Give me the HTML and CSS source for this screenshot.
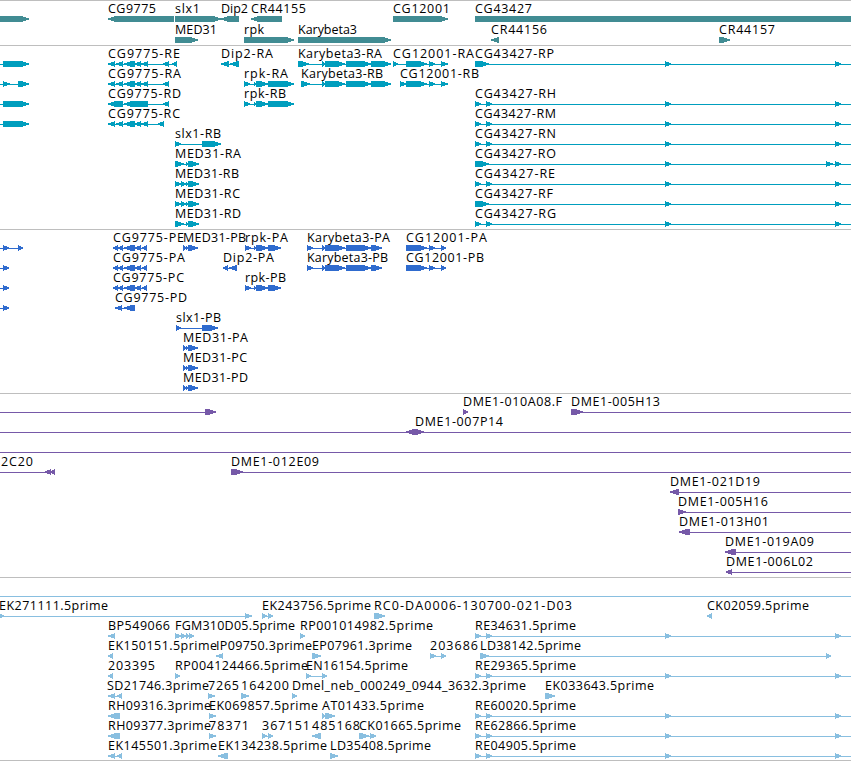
FILE: index.html
```
<!DOCTYPE html>
<html lang="en">
<head>
    <meta charset="UTF-8">
    <meta name="viewport" content="width=device-width, initial-scale=1.0">
    <title>Genome Browser</title>
    <link rel="stylesheet" href="styles.css">
</head>
<body>
    <main class="browser">
        <section class="track genes" id="genes"></section>
        <section class="track transcripts" id="transcripts"></section>
        <section class="track proteins" id="proteins"></section>
        <section class="track clones" id="clones"></section>
        <section class="track ests" id="ests"></section>
    </main>
    <script src="tracks.js"></script>
</body>
</html>
```
FILE: styles.css
```
body {
    background-color: white;
    margin: 0;
    padding: 0;
    overflow: hidden;
}

.browser {
    display: flex;
    flex-direction: column;
    width: 851px;
    overflow: hidden;
    border-bottom: 1px solid #bebebe;
}

.track {
    display: flex;
    flex-direction: column;
    border-top: 1px solid #bebebe;
    padding-bottom: 3px;
}

.row {
    display: block;
    width: 851px;
    height: 20px;
    overflow: visible;
}

.row text {
    font-family: "Open Sans", "Noto Sans", sans-serif;
    font-size: 12.5px;
    fill: black;
}

.row rect, .row polygon {
    shape-rendering: crispEdges;
}

.genes {
    fill: #418c93;
    padding-bottom: 2px;
}

.genes .row {
    height: 21px;
}

.transcripts {
    fill: #009ebe;
}

.proteins {
    fill: #2f6bce;
}

.clones {
    fill: #7659a8;
}

.ests {
    fill: #89bfe0;
    padding-bottom: 2px;
}
```
FILE: tracks.js
```
// feature: [label, label start, label end, direction, block start, block end, ...]
// blocks beyond the window edges only pull the connecting line along
const OUT = [900, 910];
const IN = [-20, -10];
const FULL = ['', 0, 0, 1, ...IN, ...OUT];

const rna = [475, 481, 486, 492, 665, 671, 835, 841, ...OUT];
const rnaLong = [475, 489, 665, 671, 835, 841, ...OUT];
const cg9775 = [108, 115, 116, 123, 124, 135, 135, 141, 141, 148];
const cg9775p = [113, 118, 118, 123, 124, 135, 135, 141, 142, 147];
const kary = [322, 325, 325, 345, 346, 371];
const rpk = [254, 256, 256, 268];
const med = [175, 184, 186, 188, 188, 199];
const medSplit = [175, 181, 181, 186, 186, 188, 188, 199];
const medP = [183, 186, 186, 188, 188, 198];

const tracks = {
    genes: [
        [
            ['', 0, 0, 1, -10, 29],
            ['CG9775', 108, 156, -1, 108, 174],
            ['slx1', 175, 200, 1, 175, 221],
            ['Dip2', 221, 248, -1, 221, 239],
            ['CR44155', 251, 306, -1, 251, 282],
            ['CG12001', 393, 450, 1, 393, 448],
            ['CG43427', 475, 532, 1, 475, 900]
        ],
        [
            ['MED31', 175, 217, 1, 175, 198],
            ['rpk', 244, 264, 1, 244, 294],
            ['Karybeta3', 298, 357, 1, 298, 391],
            ['CR44156', 491, 547, -1, 491, 499],
            ['CR44157', 719, 775, 1, 719, 730]
        ]
    ],
    transcripts: [
        [
            ['', 0, 0, 1, ...IN, 3, 29],
            ['CG9775-RE', 108, 180, -1, ...cg9775, 163, 169, 172, 177],
            ['Dip2-RA', 221, 273, -1, 221, 229, 230, 239],
            ['Karybeta3-RA', 298, 382, 1, 298, 309, ...kary, 371, 391],
            ['CG12001-RA', 393, 474, 1, 393, 398, 406, 427, 429, 435, 441, 448],
            ['CG43427-RP', 475, 554, 1, ...rnaLong]
        ],
        [
            ['', 0, 0, 1, ...IN, 3, 10, 18, 29],
            ['CG9775-RA', 108, 181, -1, ...cg9775, 163, 169],
            ['rpk-RA', 244, 288, 1, 244, 250, ...rpk, 268, 294],
            ['Karybeta3-RB', 301, 383, 1, 301, 310, ...kary, 371, 391],
            ['CG12001-RB', 400, 479, 1, 400, 406, 406, 427, 429, 435, 441, 448]
        ],
        [
            ['', 0, 0, 1, ...IN, 3, 29],
            ['CG9775-RD', 108, 181, -1, 108, 123, 124, 148, 163, 169],
            ['rpk-RB', 244, 286, 1, 244, 250, ...rpk, 268, 294],
            ['CG43427-RH', 475, 556, 1, ...rna]
        ],
        [
            ['', 0, 0, 1, ...IN, 3, 29],
            ['CG9775-RC', 108, 180, -1, ...cg9775, 158, 164],
            ['CG43427-RM', 475, 556, 1, ...rna]
        ],
        [
            ['slx1-RB', 175, 221, 1, 175, 181, 202, 221],
            ['CG43427-RN', 475, 556, 1, ...rna]
        ],
        [
            ['MED31-RA', 175, 241, 1, ...med],
            ['CG43427-RO', 475, 556, 1, 475, 489, 665, 671, 826, 833, 835, 841, ...OUT]
        ],
        [
            ['MED31-RB', 175, 239, 1, ...medSplit],
            ['CG43427-RE', 475, 555, 1, ...rna]
        ],
        [
            ['MED31-RC', 175, 240, 1, ...medSplit],
            ['CG43427-RF', 475, 553, 1, ...rnaLong]
        ],
        [
            ['MED31-RD', 175, 241, 1, ...med],
            ['CG43427-RG', 475, 556, 1, ...rna]
        ]
    ],
    proteins: [
        [
            ['', 0, 0, 1, ...IN, 3, 9, 18, 23],
            ['CG9775-PE', 113, 184, -1, ...cg9775p],
            ['MED31-PB', 183, 246, 1, ...medP],
            ['rpk-PA', 245, 288, 1, 245, 251, ...rpk, 268, 281],
            ['Karybeta3-PA', 307, 390, 1, 307, 313, ...kary, 371, 382],
            ['CG12001-PA', 406, 487, 1, 406, 427, 429, 435, 441, 446]
        ],
        [
            ['', 0, 0, 1, ...IN, 3, 9],
            ['CG9775-PA', 113, 185, -1, ...cg9775p],
            ['Dip2-PA', 223, 274, -1, 223, 228, 229, 237],
            ['Karybeta3-PB', 307, 388, 1, 307, 313, ...kary, 371, 382],
            ['CG12001-PB', 406, 484, 1, 406, 427, 429, 435, 441, 446]
        ],
        [
            ['', 0, 0, 1, ...IN, 3, 9],
            ['CG9775-PC', 113, 184, -1, ...cg9775p],
            ['rpk-PB', 245, 286, 1, 245, 251, ...rpk, 268, 281]
        ],
        [
            ['', 0, 0, 1, ...IN, 3, 9],
            ['CG9775-PD', 115, 187, -1, 115, 122, 124, 135]
        ],
        [['slx1-PB', 176, 221, 1, 176, 181, 202, 218]],
        [['MED31-PA', 183, 248, 1, ...medP]],
        [['MED31-PC', 183, 247, 1, ...medP]],
        [['MED31-PD', 183, 248, 1, ...medP]]
    ],
    clones: [
        [
            ['', 0, 0, 1, ...IN, 205, 216],
            ['DME1-010A08.F', 463, 562, 1, 463, 468],
            ['DME1-005H13', 571, 660, 1, 571, 583, ...OUT]
        ],
        [
            ['', 0, 0, -1, ...IN, 406, 415],
            ['DME1-007P14', 415, 503, 1, 415, 424, ...OUT]
        ],
        [FULL],
        [
            ['2C20', 1, 33, -1, ...IN, 45, 51, 50, 55],
            ['DME1-012E09', 231, 319, 1, 231, 243, ...OUT]
        ],
        [['DME1-021D19', 670, 760, -1, 670, 679, ...OUT]],
        [['DME1-005H16', 678, 768, 1, 678, 686, ...OUT]],
        [['DME1-013H01', 679, 769, -1, 679, 690, ...OUT]],
        [['DME1-019A09', 725, 814, -1, 725, 736, ...OUT]],
        [['DME1-006L02', 726, 813, -1, 726, 732, ...OUT]]
    ],
    ests: [
        [FULL],
        [
            ['EK271111.5prime', -1, 108, 1, -1, 4, 245, 252],
            ['EK243756.5prime', 262, 371, 1, 262, 267, 268, 273],
            ['RC0-DA0006-130700-021-D03', 374, 572, 1, 374, 385],
            ['CK02059.5prime', 707, 809, -1, 707, 712]
        ],
        [
            ['BP549066', 108, 170, -1, 108, 115],
            ['FGM310D05.5prime', 175, 295, 1, 175, 181, 181, 186, 186, 189, 189, 194],
            ['RP001014982.5prime', 300, 433, 1, 300, 305],
            ['RE34631.5prime', 475, 576, 1, ...rna]
        ],
        [
            ['EK150151.5prime', 108, 217, -1, 108, 113],
            ['IP09750.3prime', 216, 312, -1, 216, 223],
            ['EP07961.3prime', 312, 412, 1, 312, 321],
            ['203686', 430, 478, 1, 430, 436, 441, 446],
            ['LD38142.5prime', 480, 581, 1, 480, 489, 826, 831]
        ],
        [
            ['203395', 108, 155, -1, 108, 113],
            ['RP004124466.5prime', 175, 308, 1, 175, 180],
            ['EN16154.5prime', 306, 408, 1, 306, 311, 322, 327],
            ['RE29365.5prime', 475, 576, 1, ...rna]
        ],
        [
            ['SD21746.3prime', 107, 209, -1, 108, 115, 117, 122],
            ['7265', 208, 239, 1, 208, 215],
            ['164200', 241, 289, 1, 241, 249],
            ['Dmel_neb_000249_0944_3632.3prime', 292, 526, 1, 292, 297],
            ['EK033643.5prime', 545, 654, 1, 545, 555]
        ],
        [
            ['RH09316.3prime', 108, 211, -1, 108, 120],
            ['EK069857.5prime', 209, 318, 1, 209, 216],
            ['AT01433.5prime', 322, 424, 1, 322, 325, 325, 335],
            ['RE60020.5prime', 475, 576, 1, ...rna]
        ],
        [
            ['RH09377.3prime', 108, 211, -1, 108, 120],
            ['78371', 209, 249, 1, 209, 216],
            ['367151', 262, 310, 1, 262, 267, 268, 273],
            ['485168', 312, 360, -1, 312, 321],
            ['CK01665.5prime', 359, 461, 1, 359, 369, 370, 376],
            ['RE62866.5prime', 475, 576, 1, ...rna]
        ],
        [
            ['EK145501.3prime', 108, 217, -1, 108, 115, 117, 122],
            ['EK134238.5prime', 218, 327, -1, 218, 228],
            ['LD35408.5prime', 330, 431, 1, 330, 338],
            ['RE04905.5prime', 475, 576, 1, ...rna]
        ]
    ]
};

function drawBlock(a, b, dir) {
    const head = Math.min(b - a, 7);
    const tip = dir > 0 ? b : a;
    const neck = tip - dir * head;
    const back = dir > 0 ? a : b;
    return `<polygon points="${back},15 ${neck},15 ${tip},17.4 ${tip},18.6 ${neck},21 ${back},21"/>`;
}

function drawFeature([label, x, end, dir, ...pos]) {
    let out = '';
    if (pos.length > 2) {
        out += `<rect x="${pos[0]}" y="18" width="${pos[pos.length - 1] - pos[0]}" height="1"/>`;
    }
    for (let i = 0; i < pos.length; i += 2) {
        out += drawBlock(pos[i], pos[i + 1], dir);
    }
    if (label) {
        out += `<text x="${x}" y="12" textLength="${end - x}">${label}</text>`;
    }
    return out;
}

Object.keys(tracks).forEach(id => {
    document.getElementById(id).innerHTML = tracks[id]
        .map(row => `<svg class="row">${row.map(drawFeature).join('')}</svg>`)
        .join('');
});
```
